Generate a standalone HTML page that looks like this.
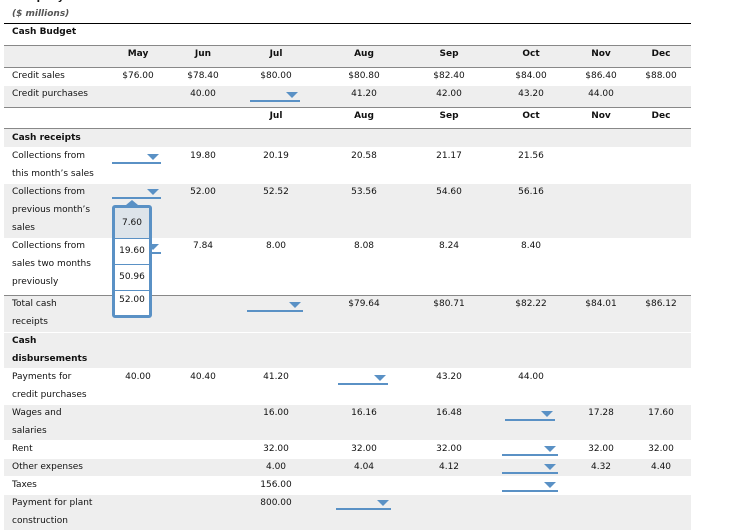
<!DOCTYPE html>
<html><head><meta charset="utf-8"><style>
*{margin:0;padding:0;box-sizing:border-box}
body{width:750px;height:524px;overflow:hidden;background:#fff;font-family:"DejaVu Sans","Liberation Sans",sans-serif;font-size:9px;color:#111;position:relative}
.a{position:absolute;white-space:nowrap}
.bg{position:absolute;left:4px;width:687px;background:#eeeeee}
.ln{position:absolute;left:4px;width:687px;height:1px;background:#888}
.t{position:absolute;line-height:18px;white-space:nowrap}
.l{left:12px}
.c{transform:translateX(-50%)}
.b{font-weight:bold}
.dd{position:absolute;height:2px;background:#5a91c5}
.dd:after{content:"";position:absolute;right:2px;top:-8px;border-left:6px solid transparent;border-right:6px solid transparent;border-top:6px solid #5a91c5}
</style></head><body>
<div class="a b" style="left:12px;top:-8px;font-size:10px">Company</div>
<div class="a b" style="left:12px;top:9px;font-size:9px;font-style:italic;color:#555">($ millions)</div>
<div style="position:absolute;left:4px;top:23px;width:687px;height:1px;background:#000"></div>
<div class="t b l" style="top:23px">Cash Budget</div>
<div class="ln" style="top:45px"></div>
<div class="bg" style="top:46px;height:21px"></div>
<div class="ln" style="top:67px"></div>
<div class="bg" style="top:86px;height:21px"></div>
<div class="ln" style="top:107px"></div>
<div class="ln" style="top:128px"></div>
<div class="bg" style="top:129px;height:18px"></div>
<div class="bg" style="top:184px;height:54px"></div>
<div class="ln" style="top:295px"></div>
<div class="bg" style="top:296px;height:36px"></div>
<div class="bg" style="top:333px;height:35px"></div>
<div class="bg" style="top:405px;height:35px"></div>
<div class="bg" style="top:459px;height:17px"></div>
<div class="bg" style="top:495px;height:35px"></div>

<div class="t b c" style="top:45px;left:138px">May</div>
<div class="t b c" style="top:45px;left:203px">Jun</div>
<div class="t b c" style="top:45px;left:276px">Jul</div>
<div class="t b c" style="top:45px;left:364px">Aug</div>
<div class="t b c" style="top:45px;left:449px">Sep</div>
<div class="t b c" style="top:45px;left:531px">Oct</div>
<div class="t b c" style="top:45px;left:601px">Nov</div>
<div class="t b c" style="top:45px;left:661px">Dec</div>

<div class="t l" style="top:67px">Credit sales</div>
<div class="t c" style="top:67px;left:138px">$76.00</div>
<div class="t c" style="top:67px;left:203px">$78.40</div>
<div class="t c" style="top:67px;left:276px">$80.00</div>
<div class="t c" style="top:67px;left:364px">$80.80</div>
<div class="t c" style="top:67px;left:449px">$82.40</div>
<div class="t c" style="top:67px;left:531px">$84.00</div>
<div class="t c" style="top:67px;left:601px">$86.40</div>
<div class="t c" style="top:67px;left:661px">$88.00</div>

<div class="t l" style="top:85px">Credit purchases</div>
<div class="t c" style="top:85px;left:203px">40.00</div>
<div class="dd" style="left:250px;top:100px;width:50px"></div>
<div class="t c" style="top:85px;left:364px">41.20</div>
<div class="t c" style="top:85px;left:449px">42.00</div>
<div class="t c" style="top:85px;left:531px">43.20</div>
<div class="t c" style="top:85px;left:601px">44.00</div>

<div class="t b c" style="top:107px;left:276px">Jul</div>
<div class="t b c" style="top:107px;left:364px">Aug</div>
<div class="t b c" style="top:107px;left:449px">Sep</div>
<div class="t b c" style="top:107px;left:531px">Oct</div>
<div class="t b c" style="top:107px;left:601px">Nov</div>
<div class="t b c" style="top:107px;left:661px">Dec</div>

<div class="t b l" style="top:129px">Cash receipts</div>
<div class="t l" style="top:147px">Collections from<br>this month’s sales</div>
<div class="dd" style="left:112px;top:162px;width:49px"></div>
<div class="t c" style="top:147px;left:203px">19.80</div>
<div class="t c" style="top:147px;left:276px">20.19</div>
<div class="t c" style="top:147px;left:364px">20.58</div>
<div class="t c" style="top:147px;left:449px">21.17</div>
<div class="t c" style="top:147px;left:531px">21.56</div>

<div class="t l" style="top:183px">Collections from<br>previous month’s<br>sales</div>
<div class="dd" style="left:112px;top:197px;width:49px"></div>
<div class="t c" style="top:183px;left:203px">52.00</div>
<div class="t c" style="top:183px;left:276px">52.52</div>
<div class="t c" style="top:183px;left:364px">53.56</div>
<div class="t c" style="top:183px;left:449px">54.60</div>
<div class="t c" style="top:183px;left:531px">56.16</div>

<div class="t l" style="top:237px">Collections from<br>sales two months<br>previously</div>
<div class="dd" style="left:112px;top:252px;width:49px"></div>
<div class="t c" style="top:237px;left:203px">7.84</div>
<div class="t c" style="top:237px;left:276px">8.00</div>
<div class="t c" style="top:237px;left:364px">8.08</div>
<div class="t c" style="top:237px;left:449px">8.24</div>
<div class="t c" style="top:237px;left:531px">8.40</div>

<div class="t l" style="top:295px">Total cash<br>receipts</div>
<div class="dd" style="left:247px;top:310px;width:56px"></div>
<div class="t c" style="top:295px;left:364px">$79.64</div>
<div class="t c" style="top:295px;left:449px">$80.71</div>
<div class="t c" style="top:295px;left:531px">$82.22</div>
<div class="t c" style="top:295px;left:601px">$84.01</div>
<div class="t c" style="top:295px;left:661px">$86.12</div>

<div class="t b l" style="top:332px">Cash<br>disbursements</div>
<div class="t l" style="top:368px">Payments for<br>credit purchases</div>
<div class="t c" style="top:368px;left:138px">40.00</div>
<div class="t c" style="top:368px;left:203px">40.40</div>
<div class="t c" style="top:368px;left:276px">41.20</div>
<div class="dd" style="left:338px;top:383px;width:50px"></div>
<div class="t c" style="top:368px;left:449px">43.20</div>
<div class="t c" style="top:368px;left:531px">44.00</div>

<div class="t l" style="top:404px">Wages and<br>salaries</div>
<div class="t c" style="top:404px;left:276px">16.00</div>
<div class="t c" style="top:404px;left:364px">16.16</div>
<div class="t c" style="top:404px;left:449px">16.48</div>
<div class="dd" style="left:505px;top:419px;width:50px"></div>
<div class="t c" style="top:404px;left:601px">17.28</div>
<div class="t c" style="top:404px;left:661px">17.60</div>

<div class="t l" style="top:440px">Rent</div>
<div class="t c" style="top:440px;left:276px">32.00</div>
<div class="t c" style="top:440px;left:364px">32.00</div>
<div class="t c" style="top:440px;left:449px">32.00</div>
<div class="dd" style="left:502px;top:454px;width:56px"></div>
<div class="t c" style="top:440px;left:601px">32.00</div>
<div class="t c" style="top:440px;left:661px">32.00</div>

<div class="t l" style="top:458px">Other expenses</div>
<div class="t c" style="top:458px;left:276px">4.00</div>
<div class="t c" style="top:458px;left:364px">4.04</div>
<div class="t c" style="top:458px;left:449px">4.12</div>
<div class="dd" style="left:502px;top:472px;width:56px"></div>
<div class="t c" style="top:458px;left:601px">4.32</div>
<div class="t c" style="top:458px;left:661px">4.40</div>

<div class="t l" style="top:476px">Taxes</div>
<div class="t c" style="top:476px;left:276px">156.00</div>
<div class="dd" style="left:502px;top:490px;width:56px"></div>

<div class="t l" style="top:494px">Payment for plant<br>construction</div>
<div class="t c" style="top:494px;left:276px">800.00</div>
<div class="dd" style="left:336px;top:508px;width:55px"></div>

<div style="position:absolute;left:126px;top:200px;border-left:6px solid transparent;border-right:6px solid transparent;border-bottom:5px solid #5a91c5"></div>
<div style="position:absolute;left:112px;top:205px;width:40px;height:113px;border:3px solid #5a91c5;border-radius:3px;background:#fff;overflow:hidden">
 <div style="height:31px;background:#dde4ea;border-bottom:1px solid #5a91c5;text-align:center;line-height:30px">7.60</div>
 <div style="height:26px;border-bottom:1px solid #5a91c5;text-align:center;line-height:25px">19.60</div>
 <div style="height:26px;border-bottom:1px solid #5a91c5;text-align:center;line-height:25px">50.96</div>
 <div style="height:24px;text-align:center;line-height:18px">52.00</div>
</div>
</body></html>
